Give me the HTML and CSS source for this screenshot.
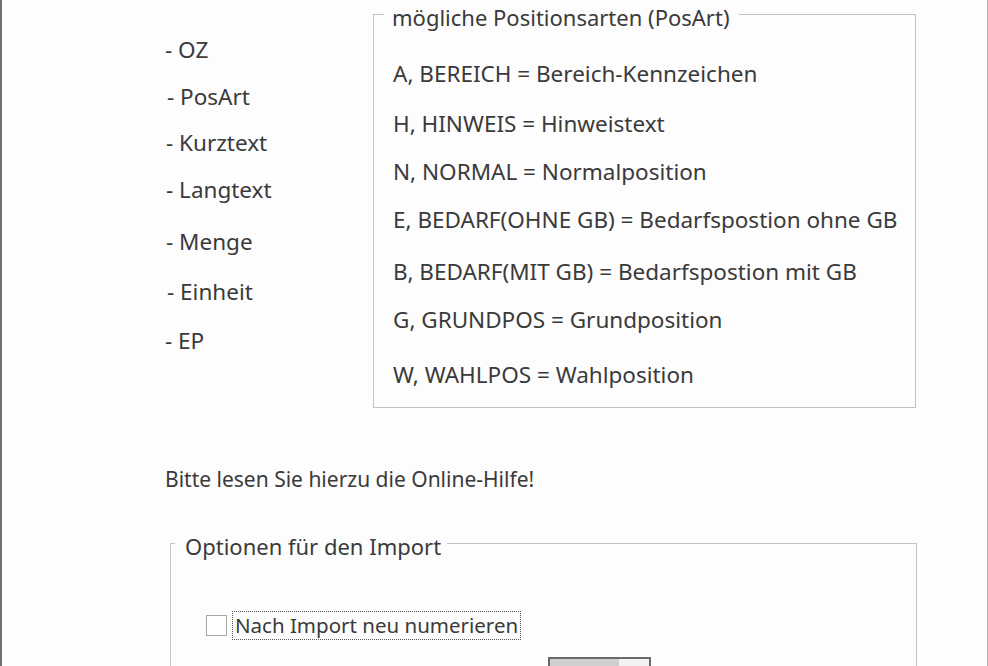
FILE: index.html
```html
<!DOCTYPE html>
<html lang="de">
<head>
<meta charset="utf-8">
<title>Import</title>
<link rel="stylesheet" href="styles.css">
</head>
<body>
<div class="window">
  <div class="top">
    <ul class="fields">
      <li>- OZ</li>
      <li>- PosArt</li>
      <li>- Kurztext</li>
      <li>- Langtext</li>
      <li>- Menge</li>
      <li>- Einheit</li>
      <li>- EP</li>
    </ul>
    <fieldset class="group posart">
      <legend>mögliche Positionsarten (PosArt)</legend>
      <ul class="types">
        <li>A, BEREICH = Bereich-Kennzeichen</li>
        <li>H, HINWEIS = Hinweistext</li>
        <li>N, NORMAL = Normalposition</li>
        <li>E, BEDARF(OHNE GB) = Bedarfspostion ohne GB</li>
        <li>B, BEDARF(MIT GB) = Bedarfspostion mit GB</li>
        <li>G, GRUNDPOS = Grundposition</li>
        <li>W, WAHLPOS = Wahlposition</li>
      </ul>
    </fieldset>
  </div>
  <p class="hint">Bitte lesen Sie hierzu die Online-Hilfe!</p>
  <fieldset class="group options">
    <legend>Optionen für den Import</legend>
    <label class="check"><span class="box"></span><span class="focus">Nach Import neu numerieren</span></label>
    <div class="row2"><span class="btn"></span></div>
  </fieldset>
</div>
</body>
</html>
```
FILE: styles.css
```css
html, body {
  margin: 0;
  padding: 0;
  background: #fdfdfd;
}
.window {
  box-sizing: border-box;
  width: 988px;
  height: 666px;
  overflow: hidden;
  border-left: 2px solid #6f6f6f;
  border-right: 1px solid #b5b5b5;
  background: #fdfdfd;
  color: #3a3a3a;
  font-family: "Noto Sans", "Open Sans", sans-serif;
  font-size: 22.5px;
}
.top {
  display: flex;
  padding-top: 1px;
}
ul {
  list-style: none;
  margin: 0;
  padding: 0;
}
li {
  line-height: 24px;
  height: 24px;
  white-space: nowrap;
}
.fields {
  width: 208px;
  padding-left: 163px;
}
.fields li:nth-child(1) { margin-top: 37px; }
.fields li:nth-child(2) { margin-top: 23px; padding-left: 2px; }
.fields li:nth-child(3) { margin-top: 22px; padding-left: 1px; }
.fields li:nth-child(4) { margin-top: 23px; padding-left: 1px; }
.fields li:nth-child(5) { margin-top: 28px; padding-left: 1px; }
.fields li:nth-child(6) { margin-top: 26px; padding-left: 2px; }
.fields li:nth-child(7) { margin-top: 25px; }

.group {
  box-sizing: border-box;
  margin: 0;
  padding: 0;
  border: 1px solid #c2c2c2;
  min-width: 0;
}
.group legend {
  padding: 6px 10px 0 8px;
  margin-left: 10px;
  line-height: 20px;
  font-size: 22px;
}
.posart {
  width: 543px;
  height: 407px;
}
.types {
  padding-left: 19px;
}
.types li:nth-child(1) { margin-top: 35px; }
.types li:nth-child(2) { margin-top: 26px; }
.types li:nth-child(3) { margin-top: 24px; }
.types li:nth-child(4) { margin-top: 24px; }
.types li:nth-child(5) { margin-top: 28px; }
.types li:nth-child(6) { margin-top: 24px; }
.types li:nth-child(7) { margin-top: 31px; }

.hint {
  margin: 59px 0 0 163px;
  line-height: 24px;
  font-size: 21px;
}
.options {
  margin: 39px 0 0 168px;
  width: 747px;
  height: 200px;
}
.options legend {
  margin-left: 4px;
  padding: 6px 6px 0 10px;
}
.check {
  display: flex;
  align-items: center;
  margin: 55px 0 0 35px;
  font-size: 20.5px;
}
.box {
  box-sizing: border-box;
  width: 21px;
  height: 21px;
  border: 1px solid #a8a8a8;
  background: #fff;
}
.focus {
  margin-left: 5px;
  padding: 1px 2px 2px 2px;
  border: 1px dotted #555;
  line-height: 24px;
}
.row2 {
  display: flex;
  padding-left: 377px;
  margin-top: 17px;
}
.btn {
  box-sizing: border-box;
  width: 103px;
  height: 30px;
  border: 2px solid #6a6a6a;
  background: linear-gradient(to right, #cfcfcf 70%, #f2f2f2 70%);
}
```
